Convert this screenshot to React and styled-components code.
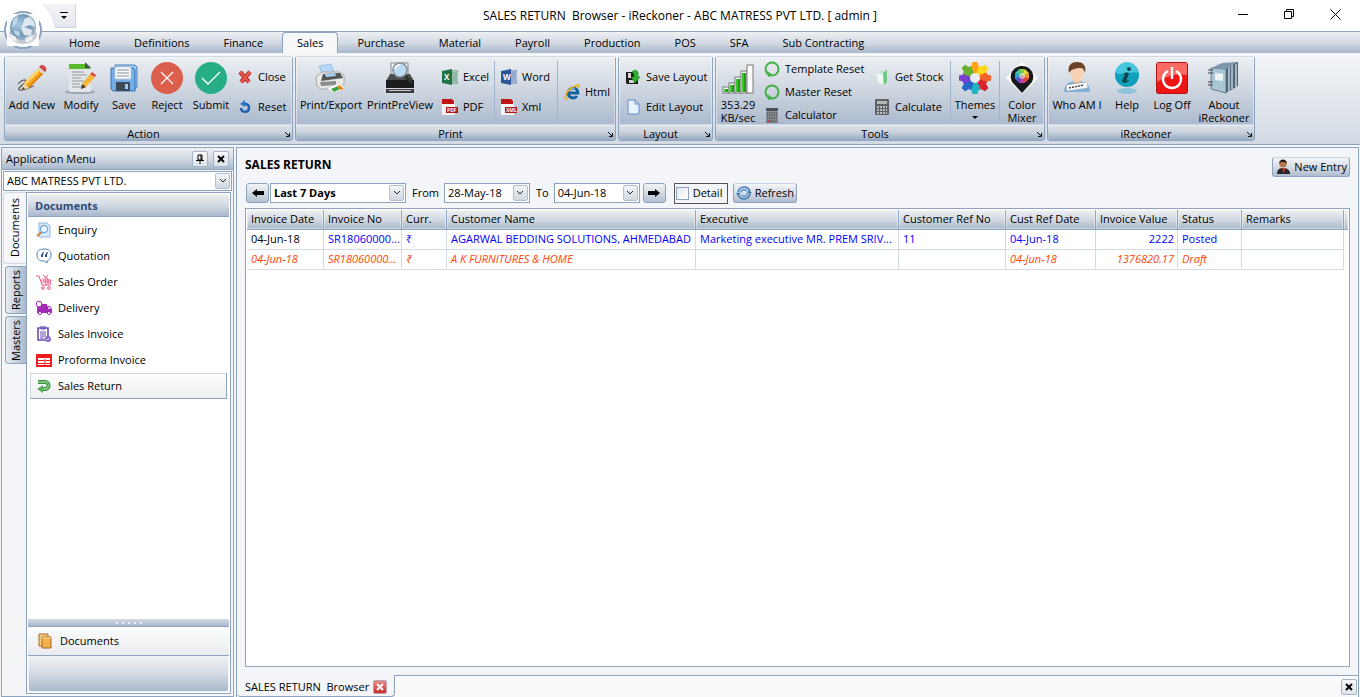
import React from 'react'
import styled, { createGlobalStyle, css } from 'styled-components'

const font = "'Open Sans', 'Noto Sans', sans-serif"

const line = '#8ea3be'
const steel = 'linear-gradient(#eef0f3, #d3dae3 50%, #a9b8cd)'

/* ---------- icons ---------- */

const Svg = ({ size = 16, children, box = size }) => (
  <svg width={size} height={size} viewBox={`0 0 ${box} ${box}`} fill="none" aria-hidden="true">
    {children}
  </svg>
)

const OrbIcon = () => (
  <svg width="40" height="40" viewBox="0 0 40 40" aria-hidden="true">
    <defs>
      <radialGradient id="globe" cx="0.35" cy="0.4" r="0.7">
        <stop offset="0" stopColor="#a9cbe2" />
        <stop offset="0.6" stopColor="#7299b6" />
        <stop offset="1" stopColor="#a9bac8" />
      </radialGradient>
    </defs>
    <circle cx="20" cy="20" r="18" fill="#fff" stroke="#8ea3be" strokeWidth="2" />
    <rect x="4" y="4" width="32" height="32" fill="#fff" />
    <path d="M6 23c0-3 3-4 5-3h18c3 0 5 2 5 5 0 4-6 9-14 9S6 29 6 23z" fill="#c3c9cf" />
    <circle cx="20" cy="17" r="13" fill="url(#globe)" />
    <path d="M22 8l5-1 4 5 1 5-5-2-6 2 8 3-1 6-7-1-3-7z" fill="#dfe8ef" />
    <path d="M10 10l5-4-1 7-5 5zM11 20l5 2 1 5-5-3z" fill="#c2d9e9" />
    <path d="M7 24l6 3 1 5-6-3zM22 28l9-3-2 5-6 3z" fill="#eef0f2" />
  </svg>
)

const PencilIcon = () => (
  <Svg size={32}>
    <path d="M2 22c4-5 9-5 7-2s-9 7-5 8 9-3 14-4" stroke="#555" strokeWidth="1.2" />
    <path d="M6 28l2-7 14-14 5 5-14 14z" fill="#f6a21b" />
    <path d="M8 21L22 7l2 2L10 23z" fill="#ffd36b" />
    <path d="M12 25L26 11l1 1-14 14z" fill="#d9780b" />
    <path d="M22 7l2-3 6 5-3 3z" fill="#d7d9dc" />
    <path d="M24 4c2-3 8 1 6 5l-1 1-6-5z" fill="#d64545" />
    <path d="M6 28l2-7 5 5z" fill="#f3d5a2" />
    <path d="M6 28l1-3 2 2z" fill="#333" />
  </Svg>
)

const ModifyIcon = () => (
  <Svg size={32}>
    <ellipse cx="15" cy="30" rx="15" ry="2" fill="#9aa6b5" />
    <path d="M4 2h17l5 5v23H4z" fill="#e3e6e9" />
    <path d="M4 2h17l5 5H4z" fill="#57bb2a" />
    <path d="M20 0l6 6h-6z" fill="#4a4d50" />
    <path d="M7 10h12M7 13h15M7 16h9M7 19h12M7 22h8M7 25h10" stroke="#8f979e" strokeWidth="1.2" />
    <path d="M16 27l1-5 8-10 5 3-9 10z" fill="#f4b63d" />
    <path d="M25 12l2-2 4 3-1 2z" fill="#d64545" />
    <path d="M16 27l1-5 4 3z" fill="#4a3a2a" />
  </Svg>
)

const SaveIcon = () => (
  <Svg size={32}>
    <path d="M7 3h20l2 2v20l-3 3H9z" fill="#9cc8f4" stroke="#4a80bc" />
    <path d="M3 6h22l2 2v21H5l-2-2z" fill="#74aee8" stroke="#3a70ac" />
    <path d="M7 5h16v12H7z" fill="#fafcff" stroke="#b5c3d2" />
    <path d="M9 8h12M9 11h12M9 14h12" stroke="#7e8994" />
    <path d="M8 20h14v9H8z" fill="#3c4a5a" />
    <path d="M17 22h3v5h-3z" fill="#a9c8ea" />
  </Svg>
)

const RejectIcon = () => (
  <Svg size={32}>
    <circle cx="16" cy="16" r="16" fill="#dc5f4e" />
    <path d="M10 10l12 12M22 10L10 22" stroke="#fff" strokeWidth="1.2" />
  </Svg>
)

const SubmitIcon = () => (
  <Svg size={32}>
    <circle cx="16" cy="16" r="16" fill="#27ae86" />
    <path d="M7 16l6 6 12-12" stroke="#fff" strokeWidth="1.4" />
  </Svg>
)

const CrossIcon = () => (
  <Svg>
    <path d="M3 3l9 10M13 3L4 13" stroke="#b52a24" strokeWidth="4.2" />
    <path d="M3 3l9 10M13 3L4 13" stroke="#e8564c" strokeWidth="2.6" />
  </Svg>
)

const ResetIcon = () => (
  <Svg>
    <path d="M6 5h3a4 4 0 1 1-5 4" stroke="#1e5faf" strokeWidth="2.4" />
    <path d="M3 5l5-4v7z" fill="#2f77cc" />
  </Svg>
)

const PrinterIcon = () => (
  <Svg size={32}>
    <path d="M4 4l12-2 4 11H8z" fill="#b5d6f7" stroke="#7fa9d6" strokeWidth="0.6" />
    <path d="M1 15l6-5h17l5 3v9l-6 5H6l-4-3z" fill="#e8e8e6" stroke="#9a9a96" strokeWidth="0.8" />
    <path d="M8 12l17-1 3 5-22 3z" fill="#555755" />
    <path d="M10 12l10-1 1 3-10 1z" fill="#a8cdf2" />
    <path d="M5 20l16-1v4l-15 1z" fill="#8b8d8c" />
    <path d="M12 26l13-5 6 6-13 4z" fill="#fff" stroke="#bbb" strokeWidth="0.5" />
    <path d="M16 27l7-3 2 3-6 3z" fill="#37a43c" />
    <path d="M22 24l3-1 4 4-4 1z" fill="#e58b26" />
  </Svg>
)

const PreviewIcon = () => (
  <Svg size={32}>
    <path d="M7 1h17v15H7z" fill="#eef2f6" stroke="#888" />
    <path d="M6 12h20l4 7H2z" fill="#4a4b4e" />
    <path d="M2 18h28v8H2z" fill="#1d1d1f" />
    <path d="M2 27h28v4H2z" fill="#3c3d40" />
    <path d="M5 28h22v1H5z" fill="#c9ccd0" />
    <path d="M20 13l8 8" stroke="#333" strokeWidth="3" />
    <circle cx="16" cy="8" r="7" fill="#bcdaf3" stroke="#8a9098" strokeWidth="1.6" />
    <path d="M11 7a5 5 0 0 1 5-4" stroke="#fff" strokeWidth="1.6" />
  </Svg>
)

const OfficeIcon = ({ color, letter }) => (
  <Svg>
    <path d="M9 2h7v12H9z" fill="#fff" stroke={color} strokeWidth="0.8" />
    <path d="M10 4h5M10 6h5M10 8h5M10 10h5M10 12h5" stroke={color} />
    <path d="M0 2l10-2v16L0 14z" fill={color} />
    <text x="2" y="11" fontSize="8" fontWeight="700" fill="#fff" fontFamily={font}>{letter}</text>
  </Svg>
)

const FileIcon = ({ label }) => (
  <Svg>
    <path d="M0 0h10l3 3v13H0z" fill="#f4f2f2" />
    <path d="M0 0h10l2 2v3H0z" fill="#c01414" />
    <path d="M4 8h12v6H4z" fill="#b01818" />
    <text x="5" y="13" fontSize="5" fontWeight="700" fill="#fff" fontFamily={font}>{label}</text>
  </Svg>
)

const IeIcon = () => (
  <Svg>
    <path d="M13 12a5 5 0 1 1 1-3H5" stroke="#12619f" strokeWidth="2.8" />
    <path d="M4 8a5 5 0 0 1 7-3" stroke="#4fb0e6" strokeWidth="1.4" />
    <path d="M4 15C-2 16 3 6 9 3s7-2 6 1" stroke="#f2b01c" strokeWidth="1.8" />
  </Svg>
)

const SaveLayoutIcon = () => (
  <Svg>
    <path d="M1 3h12v12H2l-1-1z" fill="#1c1c1c" />
    <path d="M3 4h3v5H3zM4 11h5v3H4z" fill="#d5d5d5" />
    <path d="M7 3c2-3 6-2 6 1v4h2l-5 6-4-6h3V5z" fill="#2db32d" stroke="#157a15" strokeWidth="0.6" />
  </Svg>
)

const PageIcon = () => (
  <Svg>
    <path d="M3 1h7l4 4v10H3z" fill="#eaf3fd" stroke="#5c8fca" />
    <path d="M10 1v4h4" stroke="#5c8fca" />
  </Svg>
)

const SignalIcon = () => (
  <Svg size={32}>
    {[6, 10, 16, 22, 28].map((h, i) => (
      <g key={h}>
        <rect x={1 + i * 6} y={31 - h} width="6" height={h} fill="#fff" stroke="#777" />
        {i < 4 && <rect x={2 + i * 6} y={33 - h} width="4" height={h - 3} fill="#1f9f12" />}
        {i < 4 && <rect x={2 + i * 6} y={33 - h} width="2" height={h - 3} fill="#38c42c" />}
      </g>
    ))}
  </Svg>
)

const GreenRingIcon = () => (
  <Svg>
    <circle cx="8" cy="8" r="6.5" stroke="#45b045" strokeWidth="2" />
    <path d="M3 10l6 4-5 2z" fill="#45b045" />
  </Svg>
)

const CalculatorIcon = () => (
  <Svg>
    <path d="M2 1h12v3H2z" fill="#4c4e52" />
    <path d="M3 5h10v11H3z" fill="#85888d" stroke="#5d6064" />
    <path d="M5 8h6M5 11h6M5 14h6" stroke="#3c3e41" strokeDasharray="1.5 1" />
    <path d="M4 14h2" stroke="#c43c3c" strokeWidth="2" />
  </Svg>
)

const StockIcon = () => (
  <Svg>
    <path d="M5 3l8-2v12l-8 1z" fill="#bfe8c4" />
    <path d="M9 4l4-3v12l-3 3z" fill="#6cc987" />
    <path d="M1 13l5-1V6l2 1v8z" fill="#d6f2da" />
    <path d="M3 4l6 1v10l-5-2z" fill="#eefaf0" />
  </Svg>
)

const CalculateIcon = () => (
  <Svg>
    <rect x="1" y="0" width="14" height="16" rx="1" fill="#5f6265" />
    <rect x="3" y="2" width="10" height="3" fill="#b4bab6" />
    <path d="M3 8h10M3 11h10M3 14h10" stroke="#b9bbbd" strokeWidth="2" strokeDasharray="2 1" />
  </Svg>
)

const gear = ['#ffa21a', '#fdd817', '#f4622a', '#d8232e', '#1fb3c1', '#2a68c8', '#7a3fd0', '#67b32e']
const ThemesIcon = () => (
  <Svg size={32}>
    {gear.map((fill, i) => (
      <path key={fill} d="M16 16L11 5l2-1 1-4h4l1 4 2 1z" fill={fill} stroke={fill} transform={`rotate(${i * 45} 16 16)`} />
    ))}
    <circle cx="16" cy="16" r="5" fill="#e9edf3" />
  </Svg>
)

const wheel = ['#7fd04a', '#e8dc3a', '#f0963a', '#e8483a', '#c83fae', '#5a4fd0', '#3a9ae0', '#3cc8a0']
const MixerIcon = () => (
  <Svg size={32}>
    <path d="M16 0l16 16-16 16L0 16z" fill="#fff" />
    <path d="M16 31L6 20C2 12 8 4 16 4s14 8 10 16z" fill="#17181a" />
    {wheel.map((fill, i) => (
      <path key={fill} d="M16 14L13 7h6z" fill={fill} transform={`rotate(${i * 45} 16 14)`} />
    ))}
    <circle cx="16" cy="14" r="3" fill="#f6ecd8" fillOpacity="0.6" />
  </Svg>
)

const PersonIcon = () => (
  <Svg size={32}>
    <path d="M3 30c0-8 5-11 13-11s13 3 13 11z" fill="#7fb1de" />
    <path d="M12 17h8l-1 6h-6z" fill="#e7b48d" />
    <path d="M9 9c0-4 14-4 14 0 0 6-3 11-7 11S9 15 9 9z" fill="#f7d3b3" />
    <path d="M8 11C6 3 11 0 16 0s10 3 8 11c-1-3-2-5-4-5s-9 0-12 5z" fill="#6b4226" />
    <path d="M5 23l21-3 1 6-21 3z" fill="#fdfdfd" stroke="#9aa" strokeWidth="0.6" />
    <path d="M8 26l15-3" stroke="#333" strokeWidth="1.4" strokeDasharray="2 1" />
  </Svg>
)

const HelpIcon = () => (
  <Svg size={32}>
    <ellipse cx="16" cy="29" rx="10" ry="3" fill="#8fc3d8" />
    <circle cx="16" cy="13" r="12" fill="#0fa0bd" />
    <path d="M5 11a11 11 0 0 1 22 0c-6-3-14 3-22 0z" fill="#46c9dd" />
    <circle cx="18" cy="7" r="2" fill="#0b4650" />
    <path d="M12 12c2-2 6-2 6 0l-3 7 3-1c0 3-7 4-7 1l3-7z" fill="#0b4650" />
  </Svg>
)

const PowerIcon = () => (
  <Svg size={32}>
    <rect x="0" y="0" width="32" height="32" rx="3" fill="#b31111" />
    <rect x="1" y="1" width="30" height="30" rx="2" fill="#f01515" />
    <path d="M1 1h30v12C20 11 9 15 1 20z" fill="#f96a63" />
    <path d="M12 9a9 9 0 1 0 8 0M16 5v12" stroke="#fff" strokeWidth="2.4" />
  </Svg>
)

const BooksIcon = () => (
  <Svg size={32}>
    <path d="M14 2l16-2v24l-12 7z" fill="#51697a" />
    <path d="M24 3v24M28 2v23M21 5v25" stroke="#c6d7e2" strokeWidth="1.4" />
    <path d="M3 6l15 1v24L3 27z" fill="#a9c6d7" stroke="#567" strokeWidth="0.8" />
    <path d="M3 6l11-5 16-1-12 7z" fill="#7d98aa" />
    <path d="M7 11l8 1v7l-8-1z" fill="#edf3f6" />
    <path d="M0 8h5M0 11h5M0 20h5M0 23h5" stroke="#444" strokeWidth="1.2" />
  </Svg>
)

const EnquiryIcon = () => (
  <Svg>
    <path d="M3 1h8l3 3v11H3z" fill="#dcecfb" stroke="#8fb6de" />
    <path d="M6 10l-5 4" stroke="#c9843c" strokeWidth="2" />
    <circle cx="8" cy="7" r="3.6" fill="#eef7ff" stroke="#6ba6dc" strokeWidth="1.2" />
  </Svg>
)

const QuotationIcon = () => (
  <Svg>
    <path d="M8 1c5 0 7 2 7 6s-2 5-4 6v2l-3-2c-5 0-7-2-7-6s2-6 7-6z" fill="#fff" stroke="#4f7fb5" />
    <path d="M7 4L5 7v2h2V7l1-3zM11 4L9 7v2h2V7l1-3z" fill="#2c4f96" />
  </Svg>
)

const CartIcon = () => (
  <Svg>
    <path d="M0 2h3l3 9h8l1-5H5" stroke="#e85a8a" />
    <path d="M6 8h9M9 5l1 6M12 5v6M7 1l5 4M12 1L9 5" stroke="#e85a8a" />
    <circle cx="7" cy="14" r="1.4" stroke="#e85a8a" />
    <circle cx="13" cy="14" r="1.4" stroke="#e85a8a" />
  </Svg>
)

const TruckIcon = () => (
  <Svg>
    <path d="M5 4h6v9H1V7h4zM11 6h3l2 3v4h-5z" fill="#a12bb5" />
    <circle cx="3" cy="4" r="2.8" fill="#fff" stroke="#a12bb5" />
    <path d="M12 7h2l1 2h-3z" fill="#e7c3ec" />
    <circle cx="4" cy="13" r="1.6" fill="#fff" stroke="#a12bb5" />
    <circle cx="13" cy="13" r="1.6" fill="#fff" stroke="#a12bb5" />
  </Svg>
)

const ClipboardIcon = () => (
  <Svg>
    <path d="M2 2h10v12H2z" fill="#fff" stroke="#6a4bb8" strokeWidth="1.6" />
    <path d="M5 0h4v3H5zM4 6h6M4 8h6M4 10h6M4 12h4" stroke="#6a4bb8" />
    <circle cx="12" cy="13" r="3" fill="#8767cf" />
    <path d="M10.5 13l1 1 2-2" stroke="#fff" strokeWidth="0.8" />
  </Svg>
)

const ProformaIcon = () => (
  <Svg>
    <path d="M1 3h14v11H1z" fill="#fff" stroke="#f01c1c" strokeWidth="2" />
    <path d="M1 5h14" stroke="#f01c1c" strokeWidth="2" />
    <path d="M2 8.5h7M10 8.5h4M2 11.5h7M10 11.5h4" stroke="#f01c1c" />
    <path d="M9 7v6" stroke="#f01c1c" />
  </Svg>
)

const ReturnIcon = () => (
  <Svg>
    <path d="M2 4h7a3.5 3.5 0 0 1 0 7H6" stroke="#3d8f3f" strokeWidth="4" />
    <path d="M2 4h7a3.5 3.5 0 0 1 0 7H6" stroke="#7cc67c" strokeWidth="2" />
    <path d="M7 7v8l-6-4z" fill="#5cac5c" />
  </Svg>
)

const DocsIcon = () => (
  <Svg>
    <path d="M2 1h9v12H2z" fill="#f5cf82" stroke="#a8662a" />
    <path d="M5 4h9v11H5z" fill="#f0b04a" stroke="#a8662a" />
    <path d="M5 5h9" stroke="#fbe3b0" />
  </Svg>
)

const ArrowIcon = ({ right }) => (
  <svg width="12" height="8" viewBox="0 0 12 8" aria-hidden="true">
    <path d={right ? 'M12 4L7 0v2H0v4h7v2z' : 'M0 4l5-4v2h7v4H5v2z'} fill="#000" />
  </svg>
)

const RefreshIcon = () => (
  <Svg>
    <circle cx="8" cy="8" r="6" stroke="#3c78b8" strokeWidth="1.6" strokeDasharray="16 3" />
    <circle cx="8" cy="8" r="3.4" stroke="#5d95cc" strokeWidth="1.6" strokeDasharray="8 3" />
    <path d="M0 8h5l-3 3zM11 8h5l-3-3z" fill="#3c78b8" />
  </Svg>
)

const UserIcon = () => (
  <Svg>
    <path d="M2 15c0-4 2-6 6-6s7 2 7 6z" fill="#26262a" />
    <path d="M7 9h3l-1 6z" fill="#d23a2a" />
    <circle cx="8" cy="5" r="3.6" fill="#b97849" />
    <path d="M4 5c0-6 8-6 8 0-2-3-6-3-8 0z" fill="#1e1410" />
  </Svg>
)

const Chevron = () => (
  <svg width="8" height="6" viewBox="0 0 8 6" fill="none" aria-hidden="true">
    <path d="M1 1l3 3 3-3" stroke="#222" />
  </svg>
)

const Launcher = () => (
  <svg width="5" height="5" viewBox="0 0 5 5" fill="none" aria-hidden="true">
    <path d="M0 0l4 4M4.5 1v3.5H1" stroke="#111" />
  </svg>
)

const CloseGlyph = ({ color = '#000' }) => (
  <svg width="8" height="8" viewBox="0 0 8 8" aria-hidden="true">
    <path d="M1 1l6 6M7 1L1 7" stroke={color} strokeWidth="2" />
  </svg>
)

const PinGlyph = () => (
  <svg width="8" height="10" viewBox="0 0 8 10" fill="none" aria-hidden="true">
    <path d="M2 1h4v5H2zM0 6.5h8M4 7v3M5 1v5" stroke="#000" />
  </svg>
)

/* ---------- content ---------- */

const tabs = [
  'Home', 'Definitions', 'Finance', 'Sales', 'Purchase', 'Material',
  'Payroll', 'Production', 'POS', 'SFA', 'Sub Contracting',
]

const documents = [
  ['Enquiry', EnquiryIcon],
  ['Quotation', QuotationIcon],
  ['Sales Order', CartIcon],
  ['Delivery', TruckIcon],
  ['Sales Invoice', ClipboardIcon],
  ['Proforma Invoice', ProformaIcon],
  ['Sales Return', ReturnIcon],
]

const columns = [
  ['Invoice Date', 77], ['Invoice No', 78], ['Curr.', 45], ['Customer Name', 249],
  ['Executive', 203], ['Customer Ref No', 107], ['Cust Ref Date', 90],
  ['Invoice Value', 82], ['Status', 64], ['Remarks', 102],
]

const rows = [
  {
    posted: true,
    cells: [
      '04-Jun-18', 'SR18060000...', '₹', 'AGARWAL BEDDING SOLUTIONS, AHMEDABAD',
      'Marketing executive MR. PREM SRIV...', '11', '04-Jun-18', '2222', 'Posted', '',
    ],
  },
  {
    posted: false,
    cells: ['04-Jun-18', 'SR18060000...', '₹', 'A K FURNITURES & HOME', '', '', '04-Jun-18', '1376820.17', 'Draft', ''],
  },
]

const Big = ({ icon, label, second, width, menu }) => (
  <BigButton $width={width}>
    {icon}
    <span>{label}</span>
    {second && <span>{second}</span>}
    {menu && <MenuArrow />}
  </BigButton>
)

const Small = ({ icon, children }) => (
  <SmallButton>
    {icon}
    {children}
  </SmallButton>
)

const Group = ({ title, width, children }) => (
  <GroupBox $width={width} aria-label={title}>
    <GroupBody>{children}</GroupBody>
    <GroupCaption>
      <span>{title}</span>
      <LaunchButton aria-label={`${title} options`}>
        <Launcher />
      </LaunchButton>
    </GroupCaption>
  </GroupBox>
)

const DateBox = ({ label, value, id }) => (
  <>
    <FieldLabel htmlFor={id}>{label}</FieldLabel>
    <Combo $width={86}>
      <input id={id} defaultValue={value} />
      <DropButton as="button" aria-label={`Pick ${label} date`}>
        <Chevron />
      </DropButton>
    </Combo>
  </>
)

const App = () => (
  <Window>
    <GlobalStyle />
    <TitleBar>
      <QuickAccess aria-label="Customize quick access">
        <i />
      </QuickAccess>
      <h1>SALES RETURN&nbsp; Browser - iReckoner - ABC MATRESS PVT LTD. [ admin ]</h1>
      <WindowButtons>
        <button aria-label="Minimize">
          <svg width="11" height="11" viewBox="0 0 11 11">
            <path d="M0 5.5h10" stroke="#000" />
          </svg>
        </button>
        <button aria-label="Restore">
          <svg width="11" height="11" viewBox="0 0 11 11" fill="none" stroke="#000">
            <path d="M.5 2.5h7v7h-7zM2.5 2.5v-2h7v7h-2" />
          </svg>
        </button>
        <button aria-label="Close window">
          <svg width="11" height="11" viewBox="0 0 11 11" stroke="#000">
            <path d="M.5.5l10 10M10.5.5l-10 10" />
          </svg>
        </button>
      </WindowButtons>
      <Orb aria-label="Application">
        <OrbIcon />
      </Orb>
    </TitleBar>

    <TabBar>
      {tabs.map((tab) => (
        <RibbonTab key={tab} $active={tab === 'Sales'}>{tab}</RibbonTab>
      ))}
    </TabBar>

    <Ribbon>
      <Group title="Action" width={289}>
        <Big icon={<PencilIcon />} label="Add New" width={50} />
        <Big icon={<ModifyIcon />} label="Modify" width={48} />
        <Big icon={<SaveIcon />} label="Save" width={38} />
        <Big icon={<RejectIcon />} label="Reject" width={48} />
        <Big icon={<SubmitIcon />} label="Submit" width={40} />
        <Stack $width={58}>
          <Small icon={<CrossIcon />}>Close</Small>
          <Small icon={<ResetIcon />}>Reset</Small>
        </Stack>
      </Group>
      <Group title="Print" width={321}>
        <Big icon={<PrinterIcon />} label="Print/Export" width={66} />
        <Big icon={<PreviewIcon />} label="PrintPreView" width={72} />
        <Stack $width={58}>
          <Small icon={<OfficeIcon color="#1f7244" letter="X" />}>Excel</Small>
          <Small icon={<FileIcon label="PDF" />}>PDF</Small>
        </Stack>
        <Divider />
        <Stack $width={62}>
          <Small icon={<OfficeIcon color="#2a5699" letter="W" />}>Word</Small>
          <Small icon={<FileIcon label="XML" />}>Xml</Small>
        </Stack>
        <Divider />
        <Stack $width={56}>
          <Small icon={<IeIcon />}>Html</Small>
        </Stack>
      </Group>
      <Group title="Layout" width={95}>
        <Stack $width={90} $close>
          <Small icon={<SaveLayoutIcon />}>Save Layout</Small>
          <Small icon={<PageIcon />}>Edit Layout</Small>
        </Stack>
      </Group>
      <Group title="Tools" width={330}>
        <Big icon={<SignalIcon />} label="353.29" second="KB/sec" width={40} />
        <Stack $width={110} $tight>
          <Small icon={<GreenRingIcon />}>Template Reset</Small>
          <Small icon={<GreenRingIcon />}>Master Reset</Small>
          <Small icon={<CalculatorIcon />}>Calculator</Small>
        </Stack>
        <Stack $width={82}>
          <Small icon={<StockIcon />}>Get Stock</Small>
          <Small icon={<CalculateIcon />}>Calculate</Small>
        </Stack>
        <Divider />
        <Big icon={<ThemesIcon />} label="Themes" width={48} menu />
        <Divider />
        <Big icon={<MixerIcon />} label="Color" second="Mixer" width={44} />
      </Group>
      <Group title="iReckoner" width={208}>
        <Big icon={<PersonIcon />} label="Who AM I" width={54} />
        <Big icon={<HelpIcon />} label="Help" width={46} />
        <Big icon={<PowerIcon />} label="Log Off" width={44} />
        <Big icon={<BooksIcon />} label="About" second="iReckoner" width={60} />
      </Group>
    </Ribbon>

    <Workspace>
      <SidePanel>
        <SideHeader>
          <h2>Application Menu</h2>
          <ToolButton aria-label="Pin"><PinGlyph /></ToolButton>
          <ToolButton aria-label="Close menu"><CloseGlyph /></ToolButton>
        </SideHeader>
        <CompanyRow>
          <Combo>
            <select aria-label="Company">
              <option>ABC MATRESS PVT LTD.</option>
            </select>
            <DropButton><Chevron /></DropButton>
          </Combo>
        </CompanyRow>
        <SideBody>
          <SideTabs>
            <SideTab $active>Documents</SideTab>
            <SideTab>Reports</SideTab>
            <SideTab>Masters</SideTab>
          </SideTabs>
          <NavPane>
            <NavTitle>Documents</NavTitle>
            <NavList>
              {documents.map(([name, Icon]) => (
                <li key={name}>
                  <NavLink href="#" $active={name === 'Sales Return'}>
                    <Icon />
                    {name}
                  </NavLink>
                </li>
              ))}
            </NavList>
            <Splitter>
              <i /><i /><i /><i /><i />
            </Splitter>
            <NavSection>
              <DocsIcon />
              Documents
            </NavSection>
            <NavFooter />
          </NavPane>
        </SideBody>
      </SidePanel>

      <Main>
        <Page>
          <PageHead>
            <h2>SALES RETURN</h2>
            <PushButton><UserIcon />New Entry</PushButton>
          </PageHead>
          <Filters>
            <StepButton aria-label="Previous period"><ArrowIcon /></StepButton>
            <Combo $width={136} $bold>
              <select aria-label="Period">
                <option>Last 7 Days</option>
              </select>
              <DropButton><Chevron /></DropButton>
            </Combo>
            <DateBox id="from" label="From" value="28-May-18" />
            <DateBox id="to" label="To" value="04-Jun-18" />
            <StepButton $after aria-label="Next period"><ArrowIcon right /></StepButton>
            <CheckLabel>
              <input type="checkbox" />
              Detail
            </CheckLabel>
            <PushButton><RefreshIcon />Refresh</PushButton>
          </Filters>
          <GridFrame>
            <Grid>
              <colgroup>
                {columns.map(([name, width]) => (
                  <col key={name} width={width} />
                ))}
                <col />
              </colgroup>
              <thead>
                <tr>
                  {columns.map(([name]) => (
                    <th key={name}>{name}</th>
                  ))}
                  <th aria-hidden="true" />
                </tr>
              </thead>
              <tbody>
                {rows.map(({ posted, cells }, r) => (
                  <Row key={r} $posted={posted}>
                    {cells.map((cell, c) => (
                      <td key={c}>{cell}</td>
                    ))}
                  </Row>
                ))}
              </tbody>
            </Grid>
          </GridFrame>
        </Page>
        <BottomTabs>
          <BottomTab>
            <span>SALES RETURN&nbsp; Browser</span>
            <TabClose aria-label="Close tab"><CloseGlyph color="#fff" /></TabClose>
          </BottomTab>
          <BottomRest>
            <ToolButton aria-label="Close page"><CloseGlyph /></ToolButton>
          </BottomRest>
        </BottomTabs>
      </Main>
    </Workspace>
  </Window>
)

/* ---------- styles ---------- */

const GlobalStyle = createGlobalStyle`
  * {
    box-sizing: border-box;
  }

  body {
    margin: 0;
    background: #fff;
    overflow: hidden;
  }

  body, button, input, select {
    font: 11px/14px ${font};
    color: #000;
  }

  button {
    padding: 0;
    border: 0;
    background: none;
    white-space: nowrap;
  }

  h1, h2, ul {
    margin: 0;
    padding: 0;
  }

  svg {
    display: block;
    flex: none;
  }
`

const Window = styled.div`
  display: flex;
  flex-direction: column;
  height: 100vh;
`

const TitleBar = styled.header`
  position: relative;
  display: grid;
  grid-template-columns: 1fr auto 1fr;
  align-items: center;
  flex: none;
  height: 31px;

  h1 {
    font-size: 12px;
    font-weight: 400;
    line-height: 16px;
    white-space: pre;
  }
`

const QuickAccess = styled.button`
  display: flex;
  justify-content: center;
  align-items: center;
  width: 34px;
  height: 24px;
  margin-left: 42px;
  padding-left: 10px;
  background:
    radial-gradient(circle at -20px 26px, #fff 32px, #dfe4ec 33px, transparent 34px),
    linear-gradient(#ccd4df, #ccd4df) right / 1px 100% no-repeat,
    linear-gradient(#ccd4df, #ccd4df) bottom / 100% 1px no-repeat,
    linear-gradient(#f2f4f7, #e4e8ee);

  i {
    width: 8px;
    border-top: 1px solid #000;

    &::after {
      content: '';
      display: block;
      width: 0;
      margin: 3px auto 0;
      border: 3px solid transparent;
      border-top-color: #000;
      border-bottom: 0;
    }
  }
`

const WindowButtons = styled.div`
  display: flex;
  justify-content: flex-end;
  align-self: start;
  padding-right: 2px;

  button {
    display: grid;
    place-items: center;
    width: 46px;
    height: 28px;
  }
`

const Orb = styled.button`
  position: absolute;
  top: 10px;
  left: 3px;
  z-index: 2;
`

const TabBar = styled.nav`
  display: flex;
  gap: 4px;
  flex: none;
  height: 22px;
  padding-left: 54px;
  border-top: 1px solid ${line};
  background: ${steel};
`

const RibbonTab = styled.button`
  padding: 0 14px;
  border: 1px solid transparent;
  border-bottom: 0;

  ${({ $active }) =>
    $active &&
    css`
      border-color: ${line};
      border-radius: 4px 4px 0 0;
      background: #f5f7f9;
    `}
`

const Ribbon = styled.section`
  display: flex;
  gap: 2px;
  flex: none;
  height: 92px;
  padding: 3px 4px;
  border-bottom: 1px solid ${line};
  background: linear-gradient(#f4f6f8, #d3dae4);
`

const GroupBox = styled.section`
  display: flex;
  flex-direction: column;
  flex: none;
  width: ${({ $width }) => $width}px;
  border: 1px solid ${line};
  border-top-color: #cfd8e3;
  border-radius: 3px;
`

const GroupBody = styled.div`
  display: flex;
  flex: 1;
  padding-left: 2px;
  border-bottom: 1px solid #e8ecf1;
  box-shadow: inset 0 0 0 1px rgba(255, 255, 255, 0.4);
  background: linear-gradient(#eceff3, #cdd5df 50%, #abb9ce);
`

const GroupCaption = styled.div`
  display: grid;
  grid-template-columns: 1fr 10px;
  align-items: center;
  height: 14px;
  padding-top: 1px;
  border-radius: 0 0 3px 3px;
  background: linear-gradient(#dde2e9, #c5ceda 50%, #98a9c1);

  span {
    text-align: center;
  }
`

const LaunchButton = styled.button`
  display: grid;
  place-items: center;
  height: 12px;
`

const BigButton = styled.button`
  display: flex;
  flex-direction: column;
  align-items: center;
  flex: none;
  width: ${({ $width }) => $width}px;
  padding-top: 5px;
  line-height: 13px;

  svg + span {
    margin-top: 4px;
  }
`

const MenuArrow = styled.i`
  margin-top: 5px;
  border: 3px solid transparent;
  border-top-color: #000;
  border-bottom: 0;
`

const Stack = styled.div`
  display: flex;
  flex-direction: column;
  justify-content: center;
  gap: ${({ $tight }) => ($tight ? 7 : 14)}px;
  flex: none;
  width: ${({ $width }) => $width}px;
  padding: 2px 0 0 ${({ $close }) => ($close ? 4 : 6)}px;
`

const SmallButton = styled.button`
  display: flex;
  align-items: center;
  gap: 5px;
  height: 16px;
`

const Divider = styled.div`
  flex: none;
  width: 1px;
  margin: 4px 0;
  background: #a3b3c9;
`

const Workspace = styled.div`
  display: flex;
  gap: 2px;
  flex: 1;
  min-height: 0;
  padding: 2px 1px 0;
  background: #f3f5f8;
`

const SidePanel = styled.aside`
  display: flex;
  flex-direction: column;
  flex: none;
  width: 233px;
  border: 1px solid ${line};
  background: #f3f5f7;
`

const SideHeader = styled.header`
  display: flex;
  align-items: center;
  gap: 5px;
  height: 22px;
  padding: 0 4px;
  border-bottom: 1px solid ${line};
  background: ${steel};

  h2 {
    flex: 1;
    font-size: 11px;
    font-weight: 400;
  }
`

const ToolButton = styled.button`
  display: grid;
  place-items: center;
  width: 16px;
  height: 16px;
  border: 1px solid #a6b4c8;
  border-radius: 2px;
  background: linear-gradient(#f6f8fa, #dfe4eb);
`

const CompanyRow = styled.div`
  padding: 1px;
`

const Combo = styled.div`
  display: flex;
  align-items: center;
  flex: none;
  width: ${({ $width }) => ($width ? `${$width}px` : 'auto')};
  height: 20px;
  padding-right: 1px;
  border: 1px solid ${line};
  background: #fff;

  select, input {
    flex: 1;
    min-width: 0;
    height: 18px;
    padding: 0 3px;
    border: 0;
    outline: 0;
    appearance: none;
    background: transparent;
    font-weight: ${({ $bold }) => ($bold ? 700 : 400)};
  }

  input {
    padding-bottom: 2px;
  }
`

const DropButton = styled.span`
  display: grid;
  place-items: center;
  width: 15px;
  height: 16px;
  border: 1px solid #b4c0d0;
  border-radius: 2px;
  background: linear-gradient(#f3f5f8, #cfd7e1);
`

const SideBody = styled.div`
  display: flex;
  flex: 1;
  min-height: 0;
  padding: 0 2px 2px 1px;
`

const SideTabs = styled.div`
  display: flex;
  flex-direction: column;
  align-items: flex-end;
  gap: 2px;
  width: 23px;
`

const SideTab = styled.button`
  width: 21px;
  height: 48px;
  border: 1px solid ${line};
  border-left: 0;
  border-radius: 0 4px 4px 0;
  background: linear-gradient(to left, #e9ecf1, #aab8cc);
  writing-mode: vertical-rl;
  transform: rotate(180deg);

  ${({ $active }) =>
    $active &&
    css`
      width: 23px;
      height: 72px;
      border-color: #d0d9e4;
      background: #f5f7f9;
    `}
`

const NavPane = styled.div`
  display: flex;
  flex-direction: column;
  flex: 1;
  padding: 1px;
  border: 1px solid ${line};
  background: #fff;
`

const NavTitle = styled.h2`
  height: 23px;
  padding: 0 7px;
  border-bottom: 1px solid ${line};
  border-radius: 3px 3px 0 0;
  background: ${steel};
  color: #2b4a7c;
  font-size: 11px;
  font-weight: 700;
  line-height: 23px;
`

const NavList = styled.ul`
  flex: 1;
  padding: 0 2px;
  list-style: none;
`

const NavLink = styled.a`
  display: flex;
  align-items: center;
  gap: 6px;
  height: 26px;
  padding: 0 5px;
  border: 1px solid transparent;
  color: #000;
  text-decoration: none;

  ${({ $active }) =>
    $active &&
    css`
      border-color: #d0d8e2 ${line} ${line} #d0d8e2;
      background: linear-gradient(#fdfdfe, #eceff2);
    `}
`

const Splitter = styled.div`
  display: flex;
  justify-content: center;
  align-items: center;
  gap: 4px;
  height: 7px;
  background: linear-gradient(#d3dae4, #aab8cc);

  i {
    width: 2px;
    height: 2px;
    background: #eef1f5;
  }
`

const NavSection = styled.button`
  display: flex;
  align-items: center;
  gap: 7px;
  height: 30px;
  padding: 0 9px;
  border-top: 1px solid ${line};
  border-bottom: 1px solid ${line};
  background: linear-gradient(#fbfbfc, #e9ecef);
`

const NavFooter = styled.div`
  height: 36px;
  border: 1px solid #f0f3f6;
  border-radius: 3px;
  background: ${steel};
`

const Main = styled.main`
  display: flex;
  flex-direction: column;
  flex: 1;
  min-width: 0;
  border: 1px solid ${line};
  border-bottom: 0;
`

const Page = styled.div`
  display: flex;
  flex-direction: column;
  flex: 1;
  min-height: 0;
  padding: 8px;
`

const PageHead = styled.header`
  display: flex;
  justify-content: space-between;
  align-items: center;
  height: 22px;

  h2 {
    padding-bottom: 4px;
    font-size: 12px;
    line-height: 16px;
  }
`

const PushButton = styled.button`
  display: flex;
  align-items: center;
  gap: 3px;
  height: 20px;
  padding: 0 2px;
  border: 1px solid ${line};
  border-top-color: #c9d2de;
  border-radius: 3px;
  background: linear-gradient(#f3f5f7, #d6dce5 50%, #aebccf);
`

const Filters = styled.div`
  display: flex;
  align-items: center;
  height: 20px;
  margin: 5px 0;
`

const FieldLabel = styled.label`
  margin: 0 5px 0 6px;
`

const StepButton = styled.button`
  display: grid;
  place-items: center;
  width: 23px;
  height: 20px;
  margin: ${({ $after }) => ($after ? '0 0 0 3px' : '0 1px')};
  border: 1px solid ${line};
  border-radius: 3px;
  background: linear-gradient(#f3f5f7, #b3c0d2);
`

const CheckLabel = styled.label`
  display: flex;
  align-items: center;
  gap: 4px;
  width: 54px;
  height: 21px;
  margin: 0 5px 0 8px;
  padding-left: 1px;
  border: 1px solid #555;

  input {
    flex: none;
    width: 13px;
    height: 13px;
    margin: 0;
    border: 1px solid ${line};
    appearance: none;
    background: linear-gradient(135deg, #e5e9ee, #fff);
  }
`

const GridFrame = styled.div`
  flex: 1;
  min-height: 0;
  overflow: hidden;
  padding: 1px;
  border: 1px solid ${line};
  background: #fff;
`

const Grid = styled.table`
  width: 100%;
  table-layout: fixed;
  border-collapse: separate;
  border-spacing: 0;

  th, td {
    height: 20px;
    padding: 0 1px 2px 4px;
    border-right: 1px solid #d5dbe4;
    border-bottom: 1px solid #d5dbe4;
    font-weight: 400;
    text-align: left;
    white-space: nowrap;
  }

  th {
    border-right-color: ${line};
    border-bottom-color: ${line};
    box-shadow: inset 0 0 0 1px rgba(255, 255, 255, 0.4);
    background: ${steel};
  }

  th:last-child {
    padding: 0;
    border-right: 0;
  }

  td:nth-child(8) {
    padding-right: 3px;
    text-align: right;
  }
`

const Row = styled.tr`
  color: ${({ $posted }) => ($posted ? '#00f' : '#ff4500')};
  font-style: ${({ $posted }) => ($posted ? 'normal' : 'italic')};

  td:first-child {
    color: ${({ $posted }) => ($posted ? '#000' : '#ff4500')};
  }
`

const BottomTabs = styled.div`
  display: flex;
  flex: none;
  height: 22px;
`

const BottomTab = styled.div`
  display: flex;
  align-items: center;
  gap: 4px;
  width: 158px;
  padding: 2px 0 0 8px;
  border-right: 1px solid ${line};
  border-bottom: 1px solid ${line};
  border-radius: 0 0 4px 4px;
  white-space: nowrap;
`

const TabClose = styled.button`
  display: grid;
  place-items: center;
  width: 14px;
  height: 14px;
  border: 1px solid #b9a3ab;
  border-radius: 2px;
  background: linear-gradient(#e98a8a, #cf2929);
`

const BottomRest = styled.div`
  display: flex;
  justify-content: flex-end;
  align-items: center;
  flex: 1;
  padding-right: 1px;
  border-top: 1px solid ${line};
  background: #f9fafb;
`

export default App
